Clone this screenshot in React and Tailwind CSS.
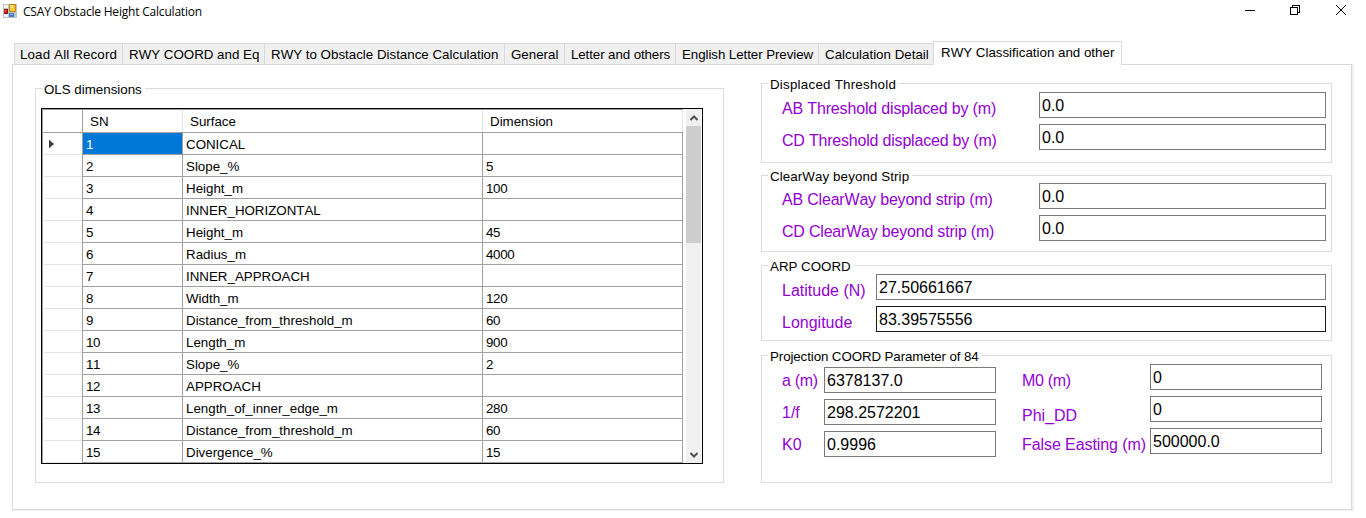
import React from "react";

const tabs = [
  { label: "Load All Record", cls: "w-[108px] pl-[5px] tracking-[0.15px]" },
  { label: "RWY COORD and Eq", cls: "w-[142px] pl-[6px]" },
  { label: "RWY to Obstacle Distance Calculation", cls: "w-[240px] pl-[6px]" },
  { label: "General", cls: "w-[60px] pl-[6px]" },
  { label: "Letter and others", cls: "w-[111px] pl-[6px] tracking-[-0.1px]" },
  { label: "English Letter Preview", cls: "w-[143px] pl-[6px] tracking-[-0.07px]" },
  { label: "Calculation Detail", cls: "w-[115px] pl-[6px]" },
];

const rows = [
  ["1", "CONICAL", ""],
  ["2", "Slope_%", "5"],
  ["3", "Height_m", "100"],
  ["4", "INNER_HORIZONTAL", ""],
  ["5", "Height_m", "45"],
  ["6", "Radius_m", "4000"],
  ["7", "INNER_APPROACH", ""],
  ["8", "Width_m", "120"],
  ["9", "Distance_from_threshold_m", "60"],
  ["10", "Length_m", "900"],
  ["11", "Slope_%", "2"],
  ["12", "APPROACH", ""],
  ["13", "Length_of_inner_edge_m", "280"],
  ["14", "Distance_from_threshold_m", "60"],
  ["15", "Divergence_%", "15"],
];

function TitleBar() {
  return (
    <header className="flex h-[41px] items-start">
      <svg className="ml-[3px] mt-1 shrink-0" width="14" height="14" viewBox="0 0 14 14" shapeRendering="crispEdges">
        <rect width="14" height="14" fill="#c3c3c3" />
        <rect x="1" y="1" width="4" height="3" fill="#f4f4f4" />
        <rect x="1" y="10" width="4" height="3" fill="#f4f4f4" />
        <rect x="6" y="0" width="7" height="8" fill="#b98a14" />
        <rect x="7" y="1" width="5" height="6" fill="#f9c838" />
        <rect x="7" y="1" width="3" height="3" fill="#fde27c" />
        <rect x="1" y="5" width="4" height="5" fill="#8f1410" />
        <rect x="1" y="6" width="3" height="3" fill="#d02a20" />
        <rect x="2" y="6" width="1" height="1" fill="#ee7a6c" />
        <rect x="6" y="9" width="5" height="4" fill="#3f74d8" />
        <rect x="7" y="10" width="3" height="1" fill="#8fb4f4" />
      </svg>
      <h1 className="ml-1.5 mt-[3px] grow whitespace-nowrap font-['Open_Sans',sans-serif] text-[12px] leading-[17px] tracking-[-0.2px]">
        CSAY Obstacle Height Calculation
      </h1>
      <div className="mr-5 mt-[5px] flex gap-9">
        <svg width="10" height="10" viewBox="0 0 10 10" shapeRendering="crispEdges">
          <rect y="5" width="10" height="1" />
        </svg>
        <svg className="-ml-px" width="10" height="10" viewBox="0 0 10 10" fill="none" stroke="#000" shapeRendering="crispEdges">
          <rect x="0.5" y="2.5" width="7" height="7" />
          <path d="M2.5 2V0.5H9.5V7.5H8" />
        </svg>
        <svg width="10" height="10" viewBox="0 0 10 10" stroke="#000">
          <path d="M0 0L10 10M10 0L0 10" />
        </svg>
      </div>
    </header>
  );
}

function TabStrip() {
  return (
    <nav className="relative z-10 ml-[14px] flex h-6 items-end">
      {tabs.map((t) => (
        <div
          key={t.label}
          className={
            "h-[22px] shrink-0 whitespace-nowrap border border-r-0 border-[#d9d9d9] bg-[#f0f0f0] text-[13.33px] leading-[22px] " +
            t.cls
          }
        >
          {t.label}
        </div>
      ))}
      <div className="h-6 w-[189px] whitespace-nowrap border border-b-0 border-[#d9d9d9] bg-white pl-[7px] text-[13.33px] leading-[22px]">
        RWY Classification and other
      </div>
    </nav>
  );
}

function Group({ title, className, legendClass = "", children }) {
  return (
    <section className={"border border-[#dcdcdc] " + className}>
      <div className="-mt-2 ml-[6px] flex h-4">
        <h2 className={"whitespace-nowrap bg-white pl-0.5 pr-[3px] text-[13.33px] leading-[17px] " + legendClass}>
          {title}
        </h2>
      </div>
      {children}
    </section>
  );
}

function GridTable() {
  return (
    <div className="ml-[5px] mt-[11px] flex h-[356px] w-[662px] border border-black">
      <div className="w-[641px] border-l border-t border-[#a0a0a0] text-[13.33px]">
        <div className="flex h-[23px] border-b border-[#a0a0a0] leading-[23px]">
          <div className="w-10 border-r border-[#a0a0a0]" />
          <div className="w-[100px] border-r border-[#e5e5e5] pl-[7px]">SN</div>
          <div className="w-[300px] border-r border-[#e5e5e5] pl-[7px]">Surface</div>
          <div className="w-[200px] border-r border-[#e5e5e5] pl-[7px]">Dimension</div>
        </div>
        {rows.map(([sn, surface, dim], i) => (
          <div key={sn} className="flex h-[22px] leading-[24px]">
            <div className="flex w-10 border-r border-[#a0a0a0] pl-px">
              <div className="flex grow items-center border-b border-[#e5e5e5] pl-[5px]">
                {i === 0 && (
                  <svg className="mt-px" width="5" height="10" viewBox="0 0 5 10">
                    <path d="M0 0.5L5 5L0 9.5Z" fill="#404040" />
                  </svg>
                )}
              </div>
            </div>
            <div
              className={
                "w-[100px] border-b border-r border-[#a0a0a0] pl-[3px] tracking-[-0.3px] " +
                (i === 0 ? "bg-[#0078d7] text-white" : "")
              }
            >
              {sn}
            </div>
            <div className="w-[300px] whitespace-nowrap border-b border-r border-[#a0a0a0] pl-[3px]">{surface}</div>
            <div className="w-[200px] border-b border-r border-[#a0a0a0] pl-[3px] tracking-[-0.3px]">{dim}</div>
          </div>
        ))}
      </div>
      <div className="ml-[3px] flex w-[15px] flex-col bg-[#f0f0f0]">
        <div className="flex h-[17px] items-center justify-center">
          <svg width="8" height="6" viewBox="0 0 8 6" fill="none" stroke="#505050" strokeWidth="2">
            <path d="M0.5 5L4 1.5L7.5 5" />
          </svg>
        </div>
        <div className="h-[117px] bg-[#cdcdcd]" />
        <div className="grow" />
        <div className="flex h-[17px] items-center justify-center">
          <svg width="8" height="6" viewBox="0 0 8 6" fill="none" stroke="#505050" strokeWidth="2">
            <path d="M0.5 1L4 4.5L7.5 1" />
          </svg>
        </div>
      </div>
    </div>
  );
}

function Field({ label, value, labelClass, boxClass }) {
  return (
    <div className="flex h-[26px] text-[16px]">
      <label className={"shrink-0 whitespace-nowrap leading-[18px] text-[#9400d3] " + labelClass}>{label}</label>
      <div className={"h-[26px] shrink-0 border pl-0.5 leading-[25px] " + boxClass}>{value}</div>
    </div>
  );
}

export default function App() {
  return (
    <main className="h-[518px] w-[1366px] overflow-hidden bg-white font-['Liberation_Sans',Arial,sans-serif] text-black [font-kerning:none]">
      <TitleBar />
      <TabStrip />
      <div className="-mt-px ml-3 flex h-[447px] w-[1342px] border-b border-r-2 border-[#f0f0f0]">
        <div className="flex w-[1340px] items-start border border-[#d9d9d9]">
          <Group title="OLS dimensions" className="ml-[22px] mt-[23px] h-[395px] w-[689px]">
            <GridTable />
          </Group>

          <div className="ml-[37px] mt-[18px] flex w-[571px] flex-col">
            <Group title="Displaced Threshold" legendClass="tracking-[0.24px]" className="h-[80px]">
              <div className="flex flex-col gap-1.5 pl-5">
                <Field label="AB Threshold displaced by (m)" value="0.0" labelClass="w-[257px] pt-2 tracking-[-0.16px]" boxClass="w-[287px] border-[#7a7a7a]" />
                <Field label="CD Threshold displaced by (m)" value="0.0" labelClass="w-[257px] pt-2 tracking-[-0.2px]" boxClass="w-[287px] border-[#7a7a7a]" />
              </div>
            </Group>
            <Group title="ClearWay beyond Strip" legendClass="tracking-[0.1px]" className="mt-3 h-[77px]">
              <div className="-mt-px flex flex-col gap-1.5 pl-5">
                <Field label="AB ClearWay beyond strip (m)" value="0.0" labelClass="w-[257px] pt-2 tracking-[-0.19px]" boxClass="w-[287px] border-[#7a7a7a]" />
                <Field label="CD ClearWay beyond strip (m)" value="0.0" labelClass="w-[257px] pt-2 tracking-[-0.2px]" boxClass="w-[287px] border-[#7a7a7a]" />
              </div>
            </Group>
            <Group title="ARP COORD" className="mt-[13px] h-[76px]">
              <div className="flex flex-col gap-1.5 pl-5">
                <Field label="Latitude (N)" value="27.50661667" labelClass="w-[94px] pt-2" boxClass="w-[450px] border-[#7a7a7a]" />
                <Field label="Longitude" value="83.39575556" labelClass="w-[94px] pt-2" boxClass="w-[450px] border-[#171717]" />
              </div>
            </Group>
            <Group title="Projection COORD Parameter of 84" legendClass="tracking-[-0.1px]" className="mt-[14px] h-[128px]">
              <div className="flex pl-5">
                <div className="mt-[3px] flex flex-col gap-1.5">
                  <Field label="a (m)" value="6378137.0" labelClass="w-[42px] pt-[5px] tracking-[-0.3px]" boxClass="w-[172px] border-[#7a7a7a]" />
                  <Field label="1/f" value="298.2572201" labelClass="w-[42px] pt-[5px]" boxClass="w-[172px] border-[#7a7a7a]" />
                  <Field label="K0" value="0.9996" labelClass="w-[42px] pt-[5px]" boxClass="w-[172px] border-[#7a7a7a]" />
                </div>
                <div className="ml-[26px] flex flex-col gap-1.5">
                  <Field label="M0 (m)" value="0" labelClass="w-[128px] pt-2 tracking-[-0.3px]" boxClass="w-[172px] border-[#7a7a7a]" />
                  <Field label="Phi_DD" value="0" labelClass="w-[128px] pt-[11px]" boxClass="w-[172px] border-[#7a7a7a]" />
                  <Field label="False Easting (m)" value="500000.0" labelClass="w-[128px] pt-2 tracking-[-0.08px]" boxClass="w-[172px] border-[#7a7a7a]" />
                </div>
              </div>
            </Group>
          </div>
        </div>
      </div>
    </main>
  );
}
